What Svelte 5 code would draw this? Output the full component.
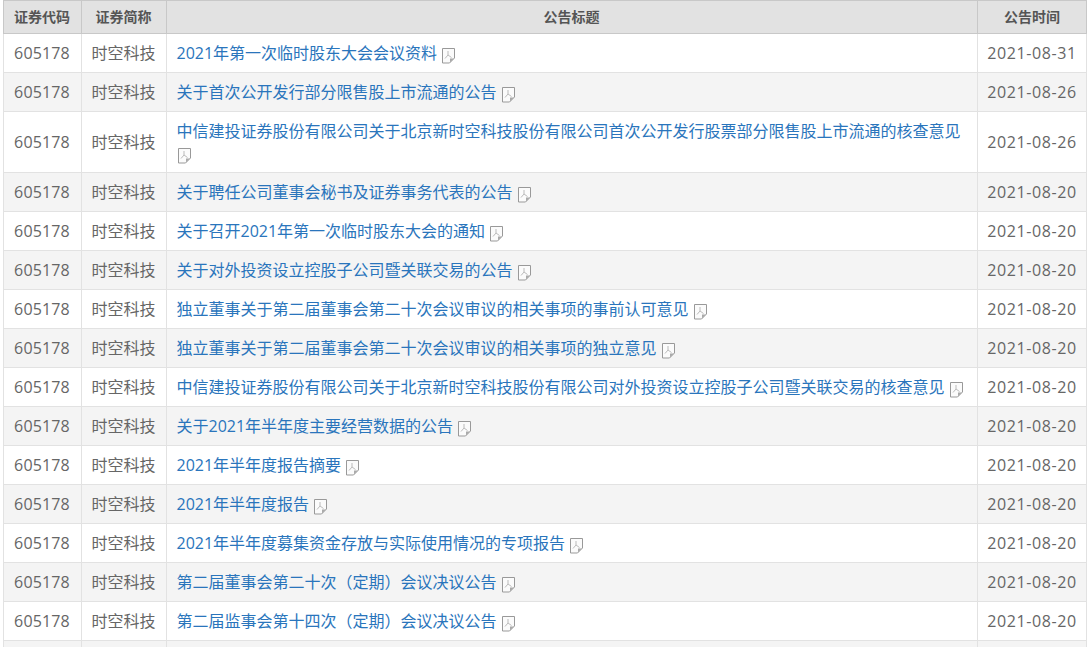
<script>
  const rows = [
    ['2021年第一次临时股东大会会议资料','2021-08-31'],
    ['关于首次公开发行部分限售股上市流通的公告','2021-08-26'],
    ['中信建投证券股份有限公司关于北京新时空科技股份有限公司首次公开发行股票部分限售股上市流通的核查意见','2021-08-26'],
    ['关于聘任公司董事会秘书及证券事务代表的公告','2021-08-20'],
    ['关于召开2021年第一次临时股东大会的通知','2021-08-20'],
    ['关于对外投资设立控股子公司暨关联交易的公告','2021-08-20'],
    ['独立董事关于第二届董事会第二十次会议审议的相关事项的事前认可意见','2021-08-20'],
    ['独立董事关于第二届董事会第二十次会议审议的相关事项的独立意见','2021-08-20'],
    ['中信建投证券股份有限公司关于北京新时空科技股份有限公司对外投资设立控股子公司暨关联交易的核查意见','2021-08-20'],
    ['关于2021年半年度主要经营数据的公告','2021-08-20'],
    ['2021年半年度报告摘要','2021-08-20'],
    ['2021年半年度报告','2021-08-20'],
    ['2021年半年度募集资金存放与实际使用情况的专项报告','2021-08-20'],
    ['第二届董事会第二十次（定期）会议决议公告','2021-08-20'],
    ['第二届监事会第十四次（定期）会议决议公告','2021-08-20'],
    ['','']
  ];
</script>

<div class="wrap">
  <table>
    <colgroup><col class="c1" /><col class="c2" /><col /><col class="c4" /></colgroup>
    <thead>
      <tr><th class="nudge">证券代码</th><th class="nudge">证券简称</th><th class="nudge">公告标题</th><th>公告时间</th></tr>
    </thead>
    <tbody>
      {#each rows as r}
        <tr>
          <td class="ctr code nudge">{r[0] ? '605178' : ''}</td>
          <td class="ctr nudge">{r[0] ? '时空科技' : ''}</td>
          <td class="title">
            {#if r[0]}
              <a href="#top">{r[0]}</a>
              <svg class="pdf" width="15" height="17" viewBox="0 0 15 17" aria-hidden="true">
                <path d="M1.5 1.5H13.5V11L8.5 16H1.5Z" fill="#fbfbfb" stroke="#999" />
                <path d="M13 11.5H9V15.5Z" fill="#aaa" />
                <path d="M7 4V8M7 8L4 11.5M7 8L10.5 10.5" fill="none" stroke="#bbb" />
              </svg>
            {/if}
          </td>
          <td class="ctr date">{r[1]}</td>
        </tr>
      {/each}
    </tbody>
  </table>
</div>

<style>
  :global(body) { margin: 0; background: #fff; overflow: hidden; }
  .wrap { padding-left: 3px; width: 1084px; height: 647px; overflow: hidden; }
  table {
    width: 1084px;
    table-layout: fixed;
    border-collapse: collapse;
    font-family: "Open Sans", "Noto Sans CJK SC", sans-serif;
    font-size: 16px;
    color: #666;
  }
  .c1 { width: 78px; }
  .c2 { width: 85px; }
  .c4 { width: 109px; }
  th {
    box-sizing: border-box;
    height: 33px;
    padding: 0;
    background: #e2e2e2;
    border: 1px solid #c8c8c8;
    font-size: 14px;
    line-height: 30px;
    font-weight: bold;
    color: #555;
    text-align: center;
  }
  td {
    box-sizing: border-box;
    height: 39px;
    padding: 0;
    border: 1px solid #e2e2e2;
    line-height: 22px;
  }
  tbody tr:nth-child(even) td { background: #f4f4f4; }
  .ctr { text-align: center; }
  th.nudge, td.nudge { padding-right: 1px; }
  .code { letter-spacing: 0.15px; }
  .date { letter-spacing: 0.6px; }
  .title { padding: 8px 10px 8px 9.5px; }
  a { color: #2a75bc; text-decoration: none; }
  .pdf { vertical-align: -5px; }
</style>
